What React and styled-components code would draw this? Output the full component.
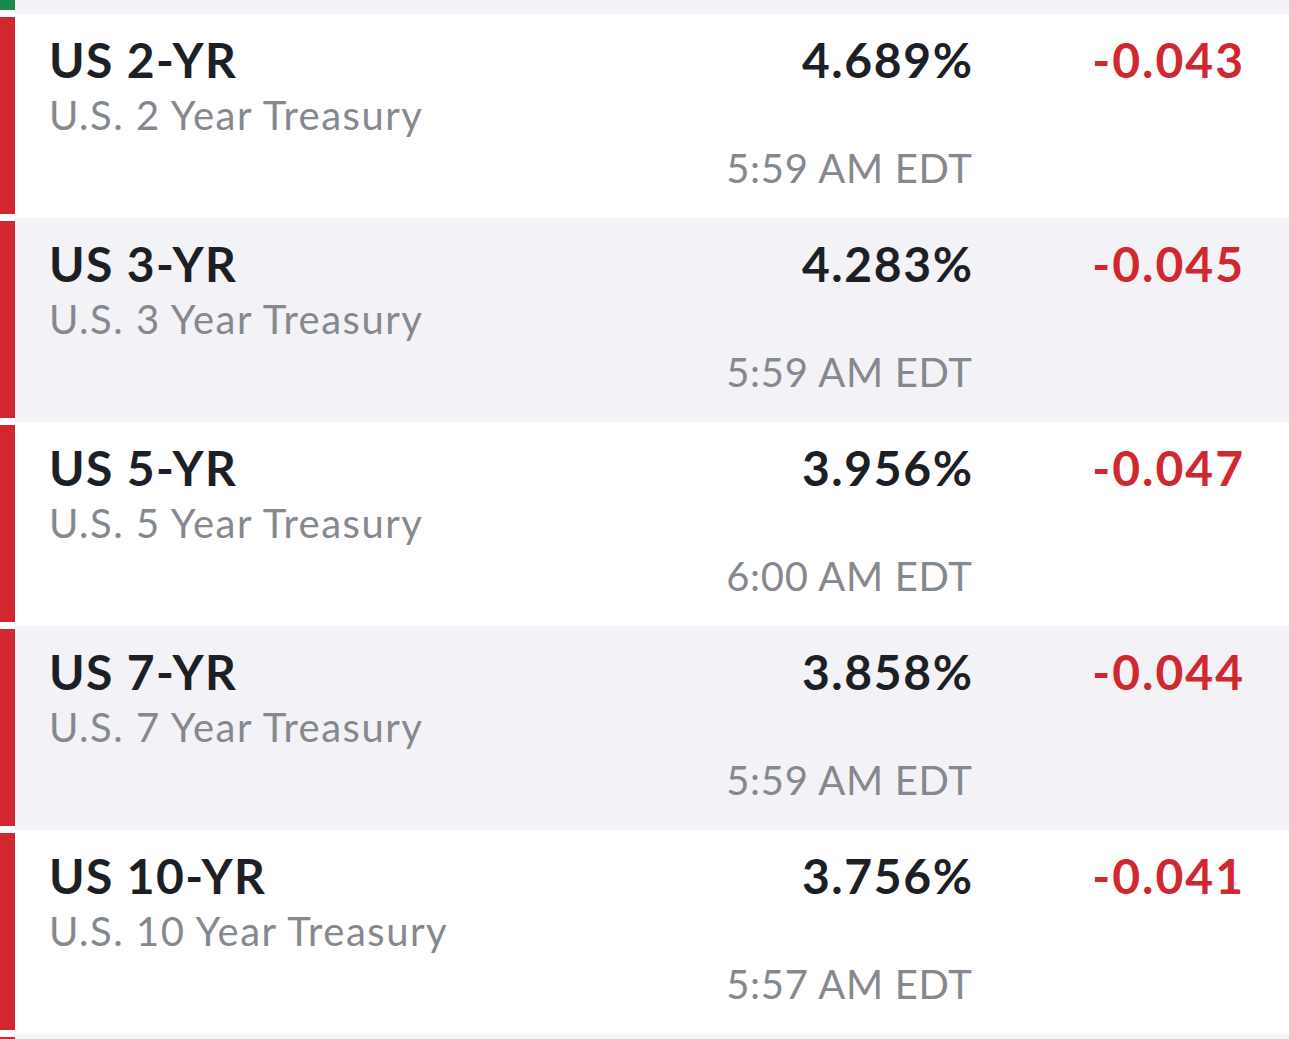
import React from "react";
import styled, { createGlobalStyle } from "styled-components";

const GlobalStyle = createGlobalStyle`
  html, body {
    margin: 0;
    padding: 0;
    background: #ffffff;
  }
  body {
    font-family: Lato, "Open Sans", "Liberation Sans", sans-serif;
    -webkit-font-smoothing: antialiased;
  }
`;

const List = styled.div`
  display: flex;
  flex-direction: column;
  width: 100%;
  overflow: hidden;
`;

const Row = styled.div`
  display: flex;
  height: ${(p) => p.$height || 204}px;
  background: ${(p) => (p.$shaded ? "#f3f3f7" : "#ffffff")};
`;

const BarCol = styled.div`
  width: 15px;
  flex: 0 0 15px;
  background: #ffffff;
  display: flex;
  flex-direction: column;
  padding: ${(p) => p.$pad || "3px 0 4px"};
  box-sizing: border-box;
`;

const Bar = styled.div`
  flex: 1;
  background: ${(p) => (p.$up ? "#1a8a4a" : "#d0282e")};
`;

const Content = styled.div`
  flex: 1;
  display: grid;
  grid-template-columns: 1fr auto 271px;
  padding: 20px 46px 0 34px;
  box-sizing: border-box;
  align-items: start;
`;

const NameCol = styled.div`
  display: flex;
  flex-direction: column;
`;

const Symbol = styled.div`
  font-size: 48px;
  line-height: 52px;
  font-weight: 700;
  color: #1d1f24;
  letter-spacing: 1.4px;
`;

const FullName = styled.div`
  margin-top: 3px;
  font-size: 40px;
  line-height: 52px;
  font-weight: 400;
  color: #85888d;
  letter-spacing: 1.5px;
`;

const PriceCol = styled.div`
  display: flex;
  flex-direction: column;
  align-items: flex-end;
`;

const Price = styled.div`
  font-size: 48px;
  line-height: 52px;
  font-weight: 700;
  color: #1d1f24;
  letter-spacing: 1.6px;
  margin-right: -1.6px;
`;

const Time = styled.div`
  margin-top: 56px;
  margin-right: -0.7px;
  font-size: 40px;
  line-height: 52px;
  font-weight: 400;
  color: #85888d;
  letter-spacing: 0.7px;
`;

const Change = styled.div`
  justify-self: end;
  margin-right: -2px;
  font-size: 48px;
  line-height: 52px;
  font-weight: 700;
  letter-spacing: 2px;
  color: ${(p) => (p.$up ? "#1a8a4a" : "#d0282e")};
`;

const rows = [
  { sym: "US 2-YR", name: "U.S. 2 Year Treasury", price: "4.689%", time: "5:59 AM EDT", chg: "-0.043" },
  { sym: "US 3-YR", name: "U.S. 3 Year Treasury", price: "4.283%", time: "5:59 AM EDT", chg: "-0.045" },
  { sym: "US 5-YR", name: "U.S. 5 Year Treasury", price: "3.956%", time: "6:00 AM EDT", chg: "-0.047" },
  { sym: "US 7-YR", name: "U.S. 7 Year Treasury", price: "3.858%", time: "5:59 AM EDT", chg: "-0.044" },
  { sym: "US 10-YR", name: "U.S. 10 Year Treasury", price: "3.756%", time: "5:57 AM EDT", chg: "-0.041" },
];

export default function App() {
  return (
    <>
      <GlobalStyle />
      <List>
        <Row $shaded $height={14}>
          <BarCol $pad="0 0 4px">
            <Bar $up />
          </BarCol>
        </Row>
        {rows.map((r, i) => (
          <Row key={r.sym} $shaded={i % 2 === 1}>
            <BarCol>
              <Bar />
            </BarCol>
            <Content>
              <NameCol>
                <Symbol>{r.sym}</Symbol>
                <FullName>{r.name}</FullName>
              </NameCol>
              <PriceCol>
                <Price>{r.price}</Price>
                <Time>{r.time}</Time>
              </PriceCol>
              <Change>{r.chg}</Change>
            </Content>
          </Row>
        ))}
        <Row $shaded $height={5}>
          <BarCol $pad="3px 0 0">
            <Bar />
          </BarCol>
        </Row>
      </List>
    </>
  );
}
